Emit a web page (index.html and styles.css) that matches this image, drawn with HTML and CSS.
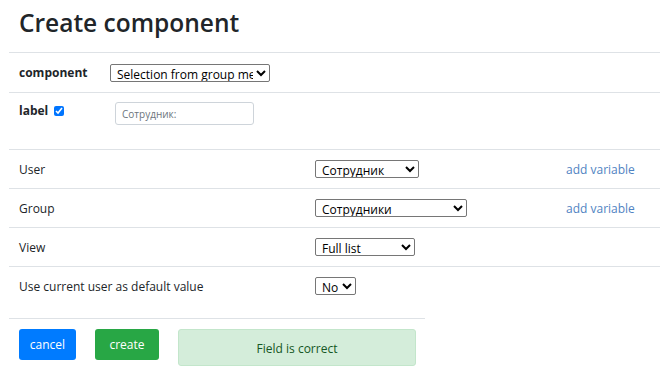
FILE: index.html
```html
<!DOCTYPE html>
<html lang="en">
<head>
    <meta charset="UTF-8">
    <title>Create component</title>
    <link rel="stylesheet" href="styles.css">
</head>
<body>
    <div class="page">
        <h1>Create component</h1>

        <div class="form-row first-row">
            <label class="field-label" for="componentType">component</label>
            <select id="componentType" class="sel sel-type">
                <option>Selection from group members</option>
            </select>
        </div>

        <div class="form-row label-row">
            <div class="field-label label-check">
                label
                <input type="checkbox" class="check" checked>
            </div>
            <input type="text" class="text-input" placeholder="Сотрудник:">
        </div>

        <div class="settings">
            <div class="setting">
                <div class="setting-name">User</div>
                <div class="setting-value">
                    <select class="sel sel-user"><option>Сотрудник</option></select>
                </div>
                <a href="#" class="add-var">add variable</a>
            </div>
            <div class="setting">
                <div class="setting-name">Group</div>
                <div class="setting-value">
                    <select class="sel sel-group"><option>Сотрудники</option></select>
                </div>
                <a href="#" class="add-var">add variable</a>
            </div>
            <div class="setting">
                <div class="setting-name">View</div>
                <div class="setting-value">
                    <select class="sel sel-view"><option>Full list</option></select>
                </div>
            </div>
            <div class="setting">
                <div class="setting-name">Use current user as default value</div>
                <div class="setting-value">
                    <select class="sel sel-default"><option>No</option></select>
                </div>
            </div>
        </div>

        <div class="footer">
            <button class="btn btn-cancel">cancel</button>
            <button class="btn btn-create">create</button>
            <div class="alert">Field is correct</div>
        </div>
    </div>
</body>
</html>
```

FILE: styles.css
```css
* {
    box-sizing: border-box;
}

body {
    margin: 0;
    font-family: 'Open Sans', 'Noto Sans', sans-serif;
    font-size: 12px;
    color: #212529;
    background: #fff;
}

.page {
    padding-left: 9px;
}

h1 {
    margin: 0;
    padding: 4px 0 0 10px;
    height: 52px;
    font-size: 24.5px;
    font-weight: 600;
    line-height: 38px;
    color: #212529;
}

.form-row {
    display: flex;
    align-items: center;
    border-top: 1px solid #dee2e6;
    padding-left: 10px;
}

.first-row {
    height: 40px;
}

.label-row {
    align-items: flex-start;
    padding-top: 9px;
    height: 57px;
}

.field-label {
    font-weight: 700;
    width: 91px;
}

.label-check {
    display: flex;
    align-items: center;
    width: 96px;
}

.check {
    margin: 0 0 0 6px;
    width: 10px;
    height: 10px;
    accent-color: #0075ff;
}

.sel {
    font-family: inherit;
    font-size: 12px;
    height: 18px;
    padding: 0 0 0 2px;
    border: 1px solid #767676;
    border-radius: 2px;
    color: #000;
    background: #fff;
}

.sel-type { width: 160px; }
.sel-user { width: 104px; }
.sel-group { width: 152px; }
.sel-view { width: 100px; }
.sel-default { width: 41px; }

.text-input {
    width: 139px;
    height: 23px;
    border: 1px solid #ced4da;
    border-radius: 3px;
    padding: 0 6px;
    font-family: inherit;
    font-size: 10px;
}

.text-input::placeholder {
    color: #6c757d;
}

.setting {
    display: flex;
    align-items: center;
    height: 39px;
    border-top: 1px solid #dee2e6;
    padding-left: 10px;
}

.setting-name {
    width: 296px;
}

.setting-value {
    width: 251px;
}

.add-var {
    color: #4f83c2;
    text-decoration: none;
}

.footer {
    display: flex;
    align-items: flex-start;
    width: 416px;
    margin-top: 13px;
    padding: 10px 0 0 10px;
    border-top: 1px solid #dee2e6;
}

.btn {
    height: 31px;
    border: none;
    border-radius: 3px;
    color: #fff;
    font-family: inherit;
    font-size: 12px;
    padding: 0 8px;
    margin-right: 19px;
    cursor: pointer;
}

.btn-cancel {
    background: #007bff;
    width: 57px;
}

.btn-create {
    background: #28a745;
    width: 64px;
}

.alert {
    width: 238px;
    height: 37px;
    line-height: 37px;
    text-align: center;
    background: #d4edda;
    border: 1px solid #c3e6cb;
    border-radius: 3px;
    color: #155724;
}
```
